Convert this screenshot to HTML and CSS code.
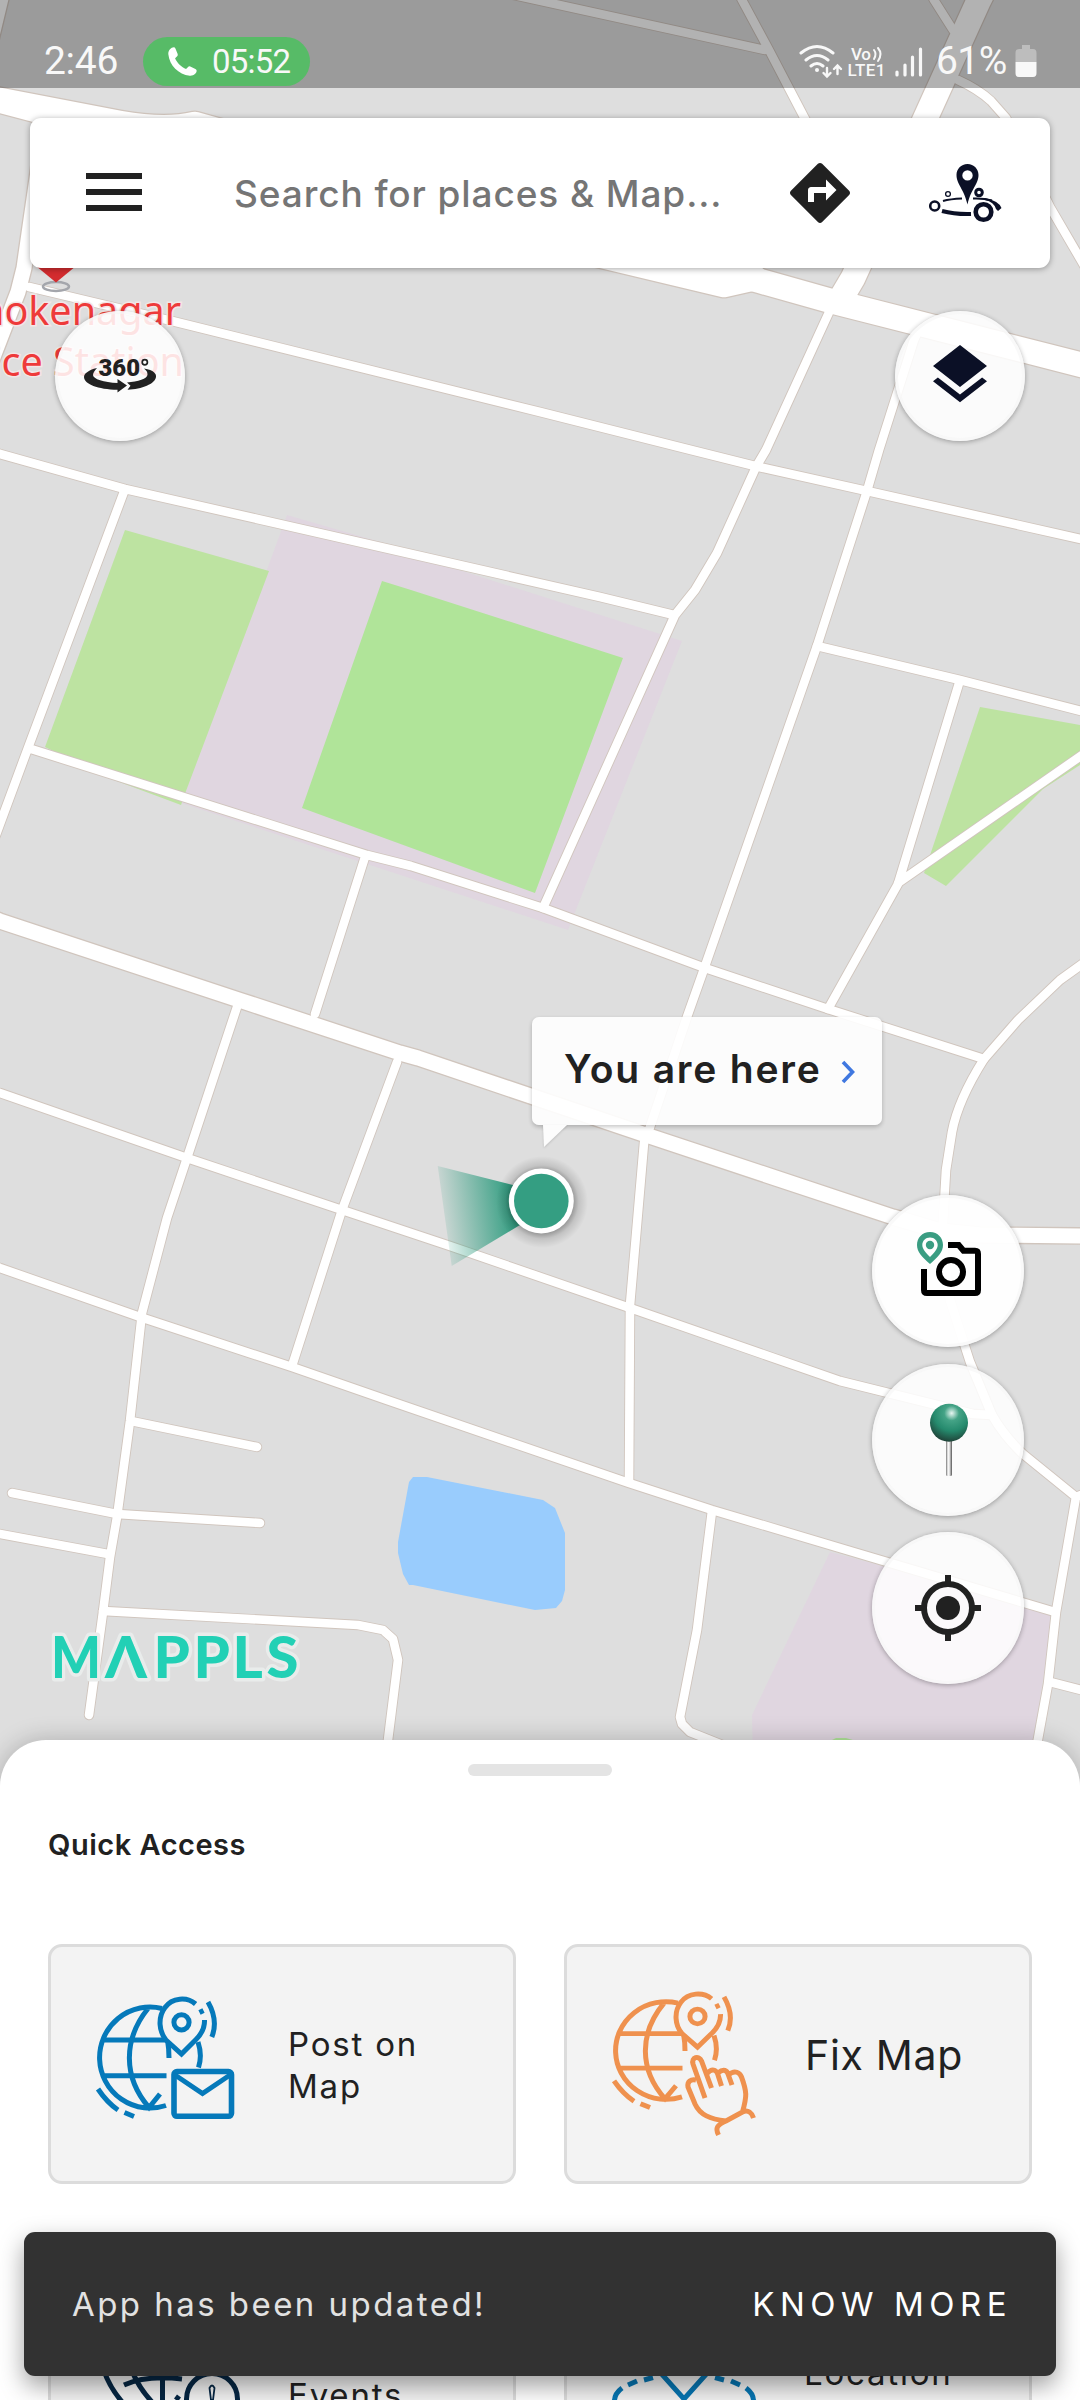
FILE: index.html
```html
<!DOCTYPE html>
<html lang="en">
<head>
<meta charset="utf-8">
<title>Mappls</title>
<link rel="stylesheet" href="styles.css">
</head>
<body>
<div class="screen">
  <svg class="map" viewBox="0 0 1080 1800" width="1080" height="1800">
    <defs>
      <linearGradient id="beam" gradientUnits="userSpaceOnUse" x1="440" y1="1216" x2="512" y2="1206">
        <stop offset="0" stop-color="#349e82" stop-opacity=".08"/>
        <stop offset="1" stop-color="#349e82"/>
      </linearGradient>
      <radialGradient id="glow">
        <stop offset=".66" stop-color="#000" stop-opacity=".34"/>
        <stop offset=".8" stop-color="#000" stop-opacity=".12"/>
        <stop offset="1" stop-color="#000" stop-opacity="0"/>
      </radialGradient>
      <g id="minor">
        <path d="M500-8 765 50M738-8 742 0 769 50 804 117 830 165M930-8 934 0 953 30M958 80Q978 89 991 101L1006 118 1050 207 1085 267"/>
        <path d="M29 287 172 321 540 412 691 450 759 467 867 491 1085 540"/>
        <path d="M831 308 766 450 756 467 717 553 695 590 675 615 543 908"/>
        <path d="M922 322 914 340 879 450 867 491 817 646 704 969 687 1017 650 1127 644 1143 630 1305 629 1482"/>
        <path d="M-5 452 0 454 125 489 275 523 600 597 674 615M125 489 28 748-6 840M28 748 367 855 411 866 543 908 705 968 828 1009 984 1059M365 857 315 1014"/>
        <path d="M817 646 960 680 1085 712M960 680 898 884 828 1009M898 883 1085 753"/>
        <path d="M1085 962 1060 980 1018 1020 984 1059Q958 1100 952 1132L946 1170 942 1240 950 1300 970 1362 992 1415Q1004 1436 1023 1454L1076 1497 1056 1612 1048 1684 1036 1750M1076 1497 1088 1492M1050 1682 1085 1691"/>
        <path d="M-5 1092 0 1093 187 1158 342 1210 450 1246 630 1308 840 1381 973 1414 992 1415"/>
        <path d="M-5 1266 0 1268 140 1317 292 1367 387 1400 629 1483 712 1510 850 1551 1055 1612"/>
        <path d="M237 1007 187 1158 167 1218 142 1313 130 1421 117 1517 110 1557 103 1612 89 1715M397 1062 342 1210 292 1366"/>
        <path d="M131 1421 257 1447M12 1493 117 1514 260 1523M-5 1533 0 1534 108 1554M103 1611 358 1625 383 1630 393 1639 398 1660 387 1748M712 1511 697 1630 680 1717 682 1724 690 1732 730 1748"/>
      </g>
      <g id="medium">
        <path d="M-8 918 0 921 239 1000 400 1053 418 1058 643 1134 893 1217 940 1231 980 1235 1090 1236"/>
        <path d="M44 130 24 268 18 292-10 365M3-10-10 44"/>
      </g>
      <g id="major">
        <path d="M-10 98 120 123Q165 131 195 124L260 142 760 281 831 301 1090 367"/>
        <path d="M-10 98 460 222 724 285 755 278"/>
        <path d="M984-10 979 0 853 278 840 300"/>
      </g>
    </defs>
    <rect class="land" width="1080" height="1800"/>
    <path class="campus" d="M287 515 425 555 459 570 682 641 568 930 181 803ZM830 1552 752 1715 753 1760H1030L1054 1612Z"/>
    <path class="park" d="M125 530 269 571 186 791 181 805 106 777 45 747ZM980 707 1080 725V765L1043 789 946 886 924 873Z"/>
    <path class="lawn" d="M382 581 411 590 623 658 535 893 302 808ZM832 1740 836 1738H846L870 1745H832Z"/>
    <path class="water" d="M413 1477H427L543 1500 555 1508 565 1533V1590L562 1601 556 1608 535 1610 413 1585H409L403 1574 398 1553V1542L409 1482Z"/>
    <g class="casing"><use href="#minor" stroke-width="10.4"/><use href="#medium" stroke-width="17.6"/><use href="#major" stroke-width="27"/></g>
    <g class="road"><use href="#minor" stroke-width="8.6"/><use href="#medium" stroke-width="15"/><use href="#major" stroke-width="24.6"/></g>
    <ellipse cx="56" cy="286.500" rx="13" ry="4.500" fill="none" stroke="#a4a6ac" stroke-width="2.500"/>
    <path d="M36 266H76L56 282.500Z" fill="#d32c2f"/>
    <g class="poi"><text x="181" y="325" text-anchor="end">Ashokenagar</text><text x="184" y="376" text-anchor="end">Police Station</text></g>
    <path d="M437.700 1166 525 1188V1222L451.700 1266Z" fill="url(#beam)"/>
    <circle cx="542" cy="1202" r="46" fill="url(#glow)"/>
    <circle cx="541.300" cy="1201" r="32.500" fill="#fff"/>
    <circle cx="541.300" cy="1201" r="27.300" fill="#349e82"/>
    <g class="logo"><text x="51" y="1678" textLength="50" lengthAdjust="spacingAndGlyphs">M</text><text x="105" y="1678" textLength="42" lengthAdjust="spacingAndGlyphs">Λ</text><text x="153.500" y="1678">P</text><text x="193.500" y="1678">P</text><text x="232.500" y="1678">L</text><text x="266.500" y="1678">S</text></g>
  </svg>

  <header class="status">
    <span class="time">2:46</span>
    <span class="call">
      <svg viewBox="3 3 18 18" width="29" height="29"><path fill="#fff" d="M6.600 3.200C5 3.200 3 5 3.200 7.500 3.900 14.500 9.500 20.100 16.500 20.800 19 21 20.800 19.300 20.800 17.800Q20.800 17 20 16.600L16.800 15.100Q16 14.800 15.300 15.500L14.200 16.700C11.500 15.700 8.500 12.800 7.400 10L8.700 8.700Q9.300 8.100 9 7.300L7.600 3.900Q7.300 3.200 6.600 3.200Z"/></svg>
      <span class="call-time">05:52</span>
    </span>
    <span class="indicators">
      <svg viewBox="798 42 126 38" width="126" height="38" fill="none" stroke="#f8f8f8" stroke-linecap="round">
        <path stroke-width="3" d="M801 53Q817 40 833 53M806 60Q817 51 828 60M811 66Q817 61 823 66"/>
        <path stroke-width="2.400" d="M827 68V76M823.500 73 827 76.500 830.500 73M837.500 74V66M834 69 837.500 65.500 841 69"/>
        <circle cx="817" cy="70" r="2" fill="#f8f8f8" stroke="none"/>
        <g class="volte"><text x="851" y="60" textLength="20">Vo</text><text x="847.500" y="76" textLength="38">LTE1</text></g>
        <path stroke-width="2" d="M874 50Q877 54 874 59M878 48Q883 54 878 61"/>
        <path stroke-width="3.200" d="M897 72V75M905 65V75M912.500 57V75M920.500 49V75"/>
      </svg>
      <span class="percent">61%</span>
      <svg viewBox="0 0 22 32" width="22" height="32"><path fill="#bdbdbd" d="M7 0H15V4H18Q21.500 4 21.500 8V17H.500V8Q.500 4 4 4H7Z"/><path fill="#f8f8f8" d="M.500 17H21.500V28Q21.500 32 18 32H4Q.500 32 .500 28Z"/></svg>
    </span>
  </header>

  <div class="search">
    <svg class="menu" viewBox="0 0 56 38" width="56" height="38"><path fill="#212121" d="M0 0H56V6H0ZM0 16H56V22H0ZM0 32H56V38H0Z"/></svg>
    <span class="placeholder">Search for places &amp; Map...</span>
    <svg class="directions" viewBox="0 0 24 24" width="72" height="72"><path fill="#212121" d="M21.710 11.290l-9-9c-.390-.390-1.020-.390-1.410 0l-9 9c-.390.390-.390 1.020 0 1.410l9 9c.390.390 1.020.390 1.410 0l9-9c.390-.380.390-1.010 0-1.410zM14 14.500V12h-4v3H8v-4c0-.550.450-1 1-1h5V7.500l3.500 3.500-3.500 3.500z"/></svg>
    <svg viewBox="930 163 73 59" width="73" height="59">
      <g fill="none" stroke="#0b1026">
        <circle cx="935.700" cy="205" r="4.500" stroke-width="2.600"/><circle cx="949" cy="193" r="2.400" stroke-width="1.300"/><circle cx="980" cy="191.500" r="3.300" stroke-width="3"/><circle cx="984.500" cy="211" r="7.800" stroke-width="4.600"/>
        <path stroke-width="4" d="M943 210Q956 213.500 972 213"/><path stroke-width="2" d="M944 200Q951 198 963 197.500M974 197.500Q984 197 993 199.500"/>
      </g>
      <path fill="#0b1026" d="M986 197Q1000 200 1002.500 207L999 210 997 208Q995 201 986 199ZM968.500 163C962 163 957.500 168 957.500 174 957.500 183 965 188 968.500 203.500 972 188 979.500 183 979.500 174 979.500 168 975 163 968.500 163ZM968.500 169.200A5.200 5.200 0 1 1 968.500 179.600 5.200 5.200 0 1 1 968.500 169.200Z" fill-rule="evenodd"/>
    </svg>
  </div>

  <div class="round-row">
    <span class="round small">
      <svg viewBox="84 356 73 36" width="73" height="36">
        <path fill="#212121" d="M97 367C88 369 84 373 84 376 84 383 98 388.500 117.500 388.800V391.500L127 384.500 117.500 378V382C104 381.500 93 378 93 374 93 371.500 95 369.500 97 367ZM144 367.500C154 369 156.500 373 156 376 155 383 142 388 127.500 388.800L130.500 384.800 127 381.500C138 380.500 147.500 378 147.500 373.500 147.500 371 146.500 369.500 144 367.500Z"/>
        <circle cx="144.800" cy="361.200" r="2.600" fill="none" stroke="#212121" stroke-width="1.700"/>
        <text class="deg" x="98.500" y="375" textLength="41.500" lengthAdjust="spacingAndGlyphs">360</text>
      </svg>
    </span>
    <span class="round small">
      <svg viewBox="0 0 24 24" width="72" height="72"><path fill="#0b1026" d="M11.990 18.540l-7.370-5.730L3 14.070l9 7 9-7-1.630-1.270-7.380 5.740zM12 16l7.360-5.730L21 9l-9-7-9 7 1.630 1.270L12 16z"/></svg>
    </span>
  </div>

  <div class="callout">
    <span>You are here</span>
    <svg viewBox="0 0 14 24" width="14" height="24"><path d="M2 2 11.500 12 2 22" fill="none" stroke="#4078e0" stroke-width="3.600"/></svg>
    <svg class="tail" viewBox="0 0 24 22" width="24" height="22"><path d="M0 0 1 22 24 0Z" fill="#fcfcfc"/></svg>
  </div>

  <div class="fabs">
    <span class="round solid">
      <svg viewBox="872 1195 152 152" width="152" height="152">
        <path d="M924 1269V1290Q924 1293 927 1293H975Q978 1293 978 1290V1254Q978 1250.700 975 1250.700H963.500L958.700 1245H948" fill="none" stroke="#000" stroke-width="6"/>
        <circle cx="951" cy="1272" r="12" fill="none" stroke="#000" stroke-width="6"/>
        <path fill="#3a9d82" fill-rule="evenodd" d="M930 1232C922 1232 917 1238 917 1245 917 1252 922 1257 930 1264 938 1257 943 1252 943 1245 943 1238 938 1232 930 1232ZM930 1237.500C934.500 1237.500 937.700 1241 937.700 1245 937.700 1249 934 1253 930 1257 926 1253 922.300 1249 922.300 1245 922.300 1241 925.500 1237.500 930 1237.500Z"/>
        <circle cx="930" cy="1245" r="4.200" fill="#3a9d82"/>
      </svg>
    </span>
    <span class="round">
      <svg viewBox="872 1364 152 152" width="152" height="152">
        <defs>
          <radialGradient id="ball" cx=".57" cy=".25" r=".78"><stop offset="0" stop-color="#e8f7f2"/><stop offset=".25" stop-color="#44a386"/><stop offset=".6" stop-color="#258a6d"/><stop offset="1" stop-color="#1f3d34"/></radialGradient>
          <linearGradient id="needle"><stop offset="0" stop-color="#777"/><stop offset=".35" stop-color="#fff"/><stop offset=".6" stop-color="#ddd"/><stop offset="1" stop-color="#555"/></linearGradient>
        </defs>
        <rect x="946" y="1438" width="6" height="38" rx="1.500" fill="url(#needle)"/>
        <circle cx="949" cy="1422.700" r="19" fill="url(#ball)"/>
      </svg>
    </span>
    <span class="round">
      <svg viewBox="872 1532 152 152" width="152" height="152" fill="none" stroke="#212121" stroke-width="6">
        <circle cx="948" cy="1608" r="24"/><circle cx="948" cy="1608" r="12" fill="#212121" stroke="none"/>
        <path d="M948 1575V1584M948 1632V1641M915 1608H924M972 1608H981"/>
      </svg>
    </span>
  </div>

  <main class="sheet">
    <div class="handle"></div>
    <h2>Quick Access</h2>
    <div class="cards">
      <div class="card">
        <svg viewBox="94 1994 144 140" width="144" height="140" fill="none" stroke="#0579ba" stroke-width="5">
          <defs>
            <g id="globe">
              <path d="M13-49A50.500 50.500 0 1 0 17 48M49-15.500Q53.500-2 49.500 10M-46-17.500H17M-46 18.300H17.500M-1-49C-26-18-26 20 0 50L11 36.500M18.700-16Q20-9 20 .500"/>
              <path d="M46.600-53.500C38-61 23-60 16-50 8.500-40 10-26 17-17.500L32.500-3.500 47-18Q56-27 55.500-37.500"/>
              <circle cx="32.500" cy="-35.200" r="7.600"/>
              <path d="M50.500-45 54.500-47M59-55.500Q69.500-37 62.800-20.500M-51 31.500Q-42 45-31 52.500M-24.500 55 -15 59"/>
            </g>
          </defs>
          <use href="#globe" transform="translate(149 2057.500)"/>
          <rect x="174" y="2071.500" width="57.500" height="44.800" rx="3" stroke-width="5.600"/>
          <path d="M175 2075 202.500 2093.500 230 2075"/>
        </svg>
        <span class="label">Post on<br>Map</span>
      </div>
      <div class="card">
        <svg viewBox="610 1984 150 160" width="150" height="160" fill="none" stroke="#ef914e" stroke-width="5">
          <use href="#globe" transform="translate(665 2050.500) scale(1 .967)"/>
          <path d="M705 2098 693 2064C691 2057 699 2055 701.500 2061L711.500 2088M707.500 2073C713 2067 717 2071 718 2075L721.500 2086M718 2073C724 2068 727 2071 728 2074L732 2085M728.500 2075C735 2069 740 2073 741.500 2077 747 2092 747 2096 742.500 2112L726 2121C710 2119 700 2115 695 2104L688 2087C687 2081 691 2079 696 2080M718.500 2135C715 2128 717 2125 726 2121L742.500 2112C748 2109 752 2113 753.500 2118"/>
        </svg>
        <span class="label large">Fix Map</span>
      </div>
      <div class="card lower">
        <svg viewBox="94 2370 150 30" width="150" height="30" fill="none" stroke="#062744" stroke-width="5">
          <path d="M104 2371Q110 2388 123 2403M124 2385Q146 2375 182 2379M132 2371Q139 2388 152 2402M162.500 2370V2400M176 2400 179 2396"/><circle cx="212" cy="2399" r="25.500"/><path stroke-width="1.800" d="M209.500 2388Q212 2383 214.500 2388L213 2400H211Z"/>
        </svg>
        <span class="label third">Events</span>
      </div>
      <div class="card lower">
        <svg viewBox="610 2370 150 30" width="150" height="30" fill="none" stroke="#0676b3" stroke-width="5">
          <path d="M659 2371 684 2399 709 2371M614.500 2402Q614 2394 622 2388M628 2385 637 2381M644 2380 653 2377.500M753.500 2402Q754 2394 746 2388M740 2385 731 2381M724 2380 715 2377.500"/>
        </svg>
        <span class="label second">Location</span>
      </div>
    </div>
  </main>

  <div class="snackbar">
    <span class="message">App has been updated!</span>
    <span class="action">KNOW MORE</span>
  </div>
</div>
</body>
</html>
```
FILE: styles.css
```css
* { box-sizing: border-box; }
body { margin: 0; font-family: Inter, "Noto Sans", sans-serif; color: #212121; }
svg { display: block; flex: none; }
.screen { position: relative; width: 1080px; height: 2400px; overflow: hidden; background: #dedede; }

.map { position: absolute; left: 0; top: 0; }
.land { fill: #dedede; }
.campus { fill: #e0d6e0; }
.park { fill: #bde3a1; }
.lawn { fill: #b0e499; }
.water { fill: #99ccfd; }
.casing, .road { fill: none; stroke-linejoin: round; stroke-linecap: round; }
.casing { stroke: #d0c5bd; }
.road { stroke: #fff; }
.poi { font: 39.500px "Noto Sans", sans-serif; fill: #ee3a3a; stroke: #f3e6e6; stroke-width: 3px; paint-order: stroke; }
.logo { font: 900 58px Lato, "Open Sans", sans-serif; fill: #22d0b5; stroke: #e9eceb; stroke-width: 7px; stroke-linejoin: round; paint-order: stroke; }

.status { position: relative; display: flex; align-items: center; height: 88px; padding: 34px 43px 0 44px; background: rgba(0, 0, 0, .3); color: #f8f8f8; font-family: Roboto, sans-serif; }
.time { width: 99px; font-size: 39px; line-height: 48px; letter-spacing: -.3px; }
.call { display: flex; align-items: center; gap: 15px; width: 167px; height: 49px; padding-left: 25px; border-radius: 25px; background: #57bb67; }
.call-time { font-size: 33px; letter-spacing: -.8px; }
.indicators { display: flex; align-items: center; margin-left: auto; }
.percent { width: 79px; padding-left: 12px; margin-right: 12px; font-size: 39px; line-height: 48px; letter-spacing: -.6px; }
.volte { font: 500 17px Roboto, sans-serif; fill: #f8f8f8; stroke: none; }

.search { position: relative; display: flex; align-items: center; width: 1020px; height: 150px; margin: 30px 30px 0; padding: 0 48px 0 56px; border-radius: 11px; background: #fff; box-shadow: 0 1px 6px rgba(0, 0, 0, .35); }
.menu { margin-bottom: 3px; }
.placeholder { margin-left: 92px; width: 552px; white-space: nowrap; font-size: 37px; font-weight: 500; letter-spacing: .9px; color: #757575; }
.directions { margin-right: 73px; }

.round-row { position: relative; display: flex; justify-content: space-between; padding: 43px 55px 0; }
.round { display: flex; align-items: center; justify-content: center; width: 152px; height: 152px; border-radius: 50%; background: rgba(255, 255, 255, .86); border: 3px solid rgba(245, 245, 245, .6); box-shadow: 0 1px 5px rgba(0, 0, 0, .32); }
.round.small { width: 130px; height: 130px; padding-bottom: 3px; }
.round.solid { background: rgba(255, 255, 255, .96); }
.deg { font: 900 24px Roboto, sans-serif; fill: #212121; }

.callout { position: absolute; left: 532px; top: 1017px; display: flex; align-items: center; gap: 20px; width: 350px; height: 108px; padding: 0 0 6px 32px; border-radius: 7px; background: rgba(255, 255, 255, .9); box-shadow: 0 2px 4px rgba(0, 0, 0, .22); font-size: 39px; font-weight: 600; letter-spacing: 1.800px; white-space: nowrap; }
.callout > span { width: 257px; }
.callout > svg:not(.tail) { margin-top: 8px; }
.tail { position: absolute; left: 11px; top: 108px; filter: drop-shadow(0 1px 1px rgba(0, 0, 0, .15)); }
.fabs { position: absolute; left: 872px; top: 1195px; display: flex; flex-direction: column; gap: 16.500px; }

.sheet { position: absolute; left: 0; top: 1740px; width: 1080px; height: 660px; overflow: visible; padding: 24px 48px 0; border-radius: 46px 46px 0 0; background: #fff; box-shadow: 0 0 24px rgba(0, 0, 0, .22); }
.handle { width: 144px; height: 12px; margin: 0 auto; border-radius: 6px; background: #e4e4e4; }
h2 { margin: 51px 0 0; font-size: 29px; line-height: 36px; font-weight: 600; letter-spacing: .5px; }
.cards { display: grid; grid-template-columns: 468px 468px; grid-auto-rows: 240px; gap: 48px; margin-top: 81px; }
.card { display: flex; align-items: center; padding-left: 43px; border: 3px solid #dcdcdc; border-radius: 14px; background: #f3f3f3; }
.label { margin-left: 50px; padding-top: 2px; font-size: 33px; line-height: 42.300px; letter-spacing: 1.800px; white-space: nowrap; }
.card:nth-child(even) .label { margin-left: 45px; }
.label.large { padding: 0 0 18px; font-size: 41px; letter-spacing: .7px; }
.card.lower { align-items: flex-start; padding-top: 135px; }
.card.lower .label { margin-left: 44px; }
.label.third { padding-top: 4px; }
.label.second { margin-top: -20px; }

.snackbar { position: absolute; left: 24px; top: 2232px; display: flex; align-items: center; justify-content: space-between; width: 1032px; height: 144px; padding: 0 44px 0 48px; border-radius: 11px; background: #323232; box-shadow: 0 10px 24px rgba(0, 0, 0, .38); font-size: 33px; }
.message { color: #e2e2e2; letter-spacing: 2.450px; }
.action { color: #fff; letter-spacing: 5.500px; }
```
